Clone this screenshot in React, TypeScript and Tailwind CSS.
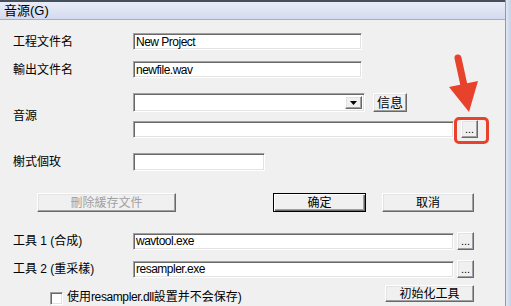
const sunken =
  "bg-white border border-t-[#a0a0a0] border-l-[#a0a0a0] border-b-white border-r-white shadow-[inset_1px_1px_0_#696969,inset_-1px_-1px_0_#e3e3e3]";
const raised =
  "bg-[#f0f0f0] border border-t-white border-l-white border-r-[#696969] border-b-[#696969] shadow-[inset_-1px_-1px_0_#a0a0a0,inset_1px_1px_0_#e3e3e3] flex items-center justify-center";
const latin = "font-['Liberation_Sans'] text-[12px] tracking-[-0.5px] pl-[2px] leading-none flex items-center";

const Field = ({ w, h = 17, value = "" }: { w: number; h?: number; value?: string }) => (
  <div className={`${sunken} ${latin}`} style={{ width: w, height: h }}>
    {value}
  </div>
);

const Dots = ({ w = 17, h = 18 }: { w?: number; h?: number }) => (
  <div className={`${raised} text-[11px] leading-none pb-[2px] items-end`} style={{ width: w, height: h }}>
    ...
  </div>
);

const App = () => {
  return (
    <div className="w-[511px] h-[306px] overflow-hidden flex bg-[#f0f0f0] relative text-black text-[12px] font-['Liberation_Sans','Noto_Sans_CJK_SC',sans-serif]">
      <div className="w-[506px] shrink-0 flex flex-col border-r border-[#8f9cab]">
        <div className="h-[2px] bg-[#44515c]" />
        <div className="h-[18px] bg-gradient-to-b from-[#e9edf8] to-[#d4dbef] border-b border-[#a7aebd] flex items-center pl-[4px] text-[13px]">
          音源(G)
        </div>

        <div className="flex flex-col pl-[13px]">
          <div className="mt-[13px] h-[17px] flex items-center">
            <span className="w-[120px]">工程文件名</span>
            <Field w={229} value="New Project" />
          </div>
          <div className="mt-[11px] h-[17px] flex items-center">
            <span className="w-[120px]">輸出文件名</span>
            <Field w={229} value="newfile.wav" />
          </div>

          <div className="mt-[15px] flex items-center">
            <span className="w-[120px]">音源</span>
            <div className="flex flex-col gap-[8px]">
              <div className="h-[19px] flex items-center">
                <div className={`${sunken} w-[232px] h-[19px] flex justify-end p-[2px]`}>
                  <div className={`${raised} w-[17px] h-full`}>
                    <svg width="7" height="4" viewBox="0 0 7 4">
                      <path d="M0 0h7L3.5 4z" fill="#000" />
                    </svg>
                  </div>
                </div>
                <div className={`${raised} ml-[8px] w-[34px] h-[19px] text-[13px]`}>信息</div>
              </div>
              <div className="h-[18px] flex items-center">
                <Field w={321} />
                <div className="ml-[7px]">
                  <Dots />
                </div>
              </div>
            </div>
          </div>

          <div className="mt-[15px] h-[18px] flex items-center">
            <span className="w-[120px]">榭式個玫</span>
            <Field w={132} h={18} />
          </div>
        </div>

        <div className="mt-[22px] h-[19px] flex items-center pl-[37px]">
          <div className={`${raised} w-[139px] h-[19px] text-[#a0a0a0]`}>刪除緩存文件</div>
          <div className="ml-[97px] w-[93px] h-[19px] border border-black shadow-[inset_1px_1px_0_#fff,inset_-1px_-1px_0_#696969,inset_-2px_-2px_0_#a0a0a0] flex items-center justify-center">
            确定
          </div>
          <div className={`${raised} ml-[16px] w-[92px] h-[19px]`}>取消</div>
        </div>

        <div className="flex flex-col pl-[13px]">
          <div className="mt-[20px] h-[18px] flex items-center">
            <span className="w-[120px]">工具 1 (合成)</span>
            <Field w={321} value="wavtool.exe" />
            <div className="ml-[3px]">
              <Dots />
            </div>
          </div>
          <div className="mt-[10px] h-[18px] flex items-center">
            <span className="w-[120px]">工具 2 (重采樣)</span>
            <Field w={321} value="resampler.exe" />
            <div className="ml-[3px]">
              <Dots />
            </div>
          </div>
        </div>

        <div className="mt-[7px] h-[17px] flex items-start pl-[50px] pr-[31px]">
          <div className={`${sunken} w-[13px] h-[13px] mt-[7px]`} />
          <span className="ml-[4px] mt-[5px] leading-[14px]">
            使用<span className="tracking-[-0.4px]">resampler.dll</span>設置并不会保存)
          </span>
          <div className={`${raised} ml-auto w-[89px] h-[17px]`}>初始化工具</div>
        </div>
      </div>

      <div className="flex-1 bg-gradient-to-r from-[#dfe8f3] to-[#c3d2e5]" />

      <div className="absolute left-[454px] top-[117px] w-[35px] h-[27px] border-[3px] border-[#e8412c] rounded-[5px] pointer-events-none" />
      <svg className="absolute left-0 top-0 pointer-events-none" width="511" height="306" viewBox="0 0 511 306">
        <line x1="458" y1="58" x2="465" y2="90" stroke="#e8412c" strokeWidth="7" strokeLinecap="round" />
        <polygon points="449,87 478,81 469,112" fill="#e8412c" />
      </svg>
    </div>
  );
};

export default App;
